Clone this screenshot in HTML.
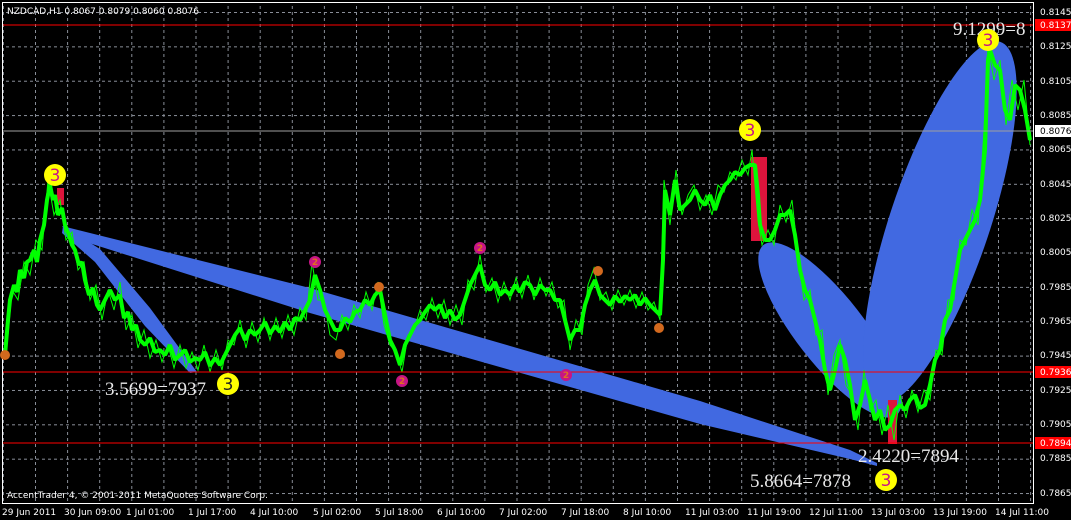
<!DOCTYPE html>
<html><head><meta charset="utf-8"><style>
html,body{margin:0;padding:0;background:#000;width:1071px;height:520px;overflow:hidden}
svg{display:block}
text{font-family:"DejaVu Sans","Liberation Sans",sans-serif}
</style></head><body>
<svg width="1071" height="520" xmlns="http://www.w3.org/2000/svg">
<defs>
<pattern id="gv" patternUnits="userSpaceOnUse" x="35" y="0" width="32.1" height="6"><line x1="0.5" y1="0" x2="0.5" y2="3" stroke="#8a8f99"/></pattern>
<pattern id="gh" patternUnits="userSpaceOnUse" x="0" y="12" width="6" height="34.36"><line x1="0" y1="0.5" x2="3" y2="0.5" stroke="#8a8f99"/></pattern>
</defs>
<rect width="1071" height="520" fill="#000"/>
<rect x="3" y="3" width="1030" height="500" fill="url(#gv)"/>
<rect x="3" y="3" width="1030" height="500" fill="url(#gh)"/>
<g fill="#4169e1">
<polygon points="62,226 310,288 700,401 850,450 877,463 877,466 850,459 700,424 310,313 70,237"/>
<polygon points="63,226 100,249 150,308 197,372 190,373 145,326 95,262 62,233"/>
<ellipse cx="830" cy="330" rx="108" ry="34" transform="rotate(52 830 330)"/>
<ellipse cx="940" cy="222" rx="190" ry="50" transform="rotate(-71.5 940 222)"/>
</g>
<g fill="#dc143c">
<rect x="57" y="188" width="7" height="17"/>
<rect x="751" y="157" width="16" height="84"/>
<rect x="888" y="400" width="9" height="44"/>
</g>
<polyline fill="none" stroke="#00ff00" stroke-width="4" stroke-linejoin="bevel" points="5,355 8,320 10,300 14,285 17,292 20,270 24,278 27,262 30,260 34,250 37,262 40,240 44,225 47,200 50,185 53,200 55,195 58,215 62,208 65,225 69,235 72,245 75,250 79,265 82,262 85,280 89,295 93,288 97,305 100,310 105,300 110,290 115,300 120,295 124,318 128,312 132,330 136,325 140,340 145,345 150,338 155,352 160,350 165,355 170,345 175,360 180,355 185,350 190,362 195,358 200,360 205,352 210,366 215,358 220,365 225,355 230,345 235,335 240,328 245,340 250,330 255,335 260,330 265,322 270,334 275,326 280,332 285,322 290,330 295,318 300,320 305,310 310,300 315,275 320,290 325,310 330,320 335,330 340,330 345,318 350,322 355,312 360,310 365,300 370,305 375,295 380,290 385,315 390,340 395,350 400,365 405,345 410,335 415,325 420,320 425,312 430,305 435,310 440,305 445,318 450,310 455,320 460,315 465,300 470,285 475,275 480,265 485,285 490,290 495,282 500,295 505,290 510,295 515,285 520,292 525,282 530,285 535,295 540,285 545,290 550,290 555,300 560,300 565,320 570,340 575,330 580,330 585,305 590,290 595,280 600,295 605,300 610,305 615,296 620,302 625,296 630,300 635,295 640,305 645,298 650,305 655,310 660,315 663,260 665,190 670,215 675,180 680,210 685,205 690,200 695,190 700,200 705,205 710,195 715,210 720,195 725,185 730,180 735,172 740,175 745,168 750,165 755,165 758,195 760,225 765,240 770,240 775,230 780,215 785,215 790,210 795,235 800,270 805,290 810,300 815,320 820,340 825,370 830,390 835,370 840,345 845,360 850,385 855,420 860,405 865,380 870,400 875,420 880,410 885,430 890,425 895,410 900,405 905,410 910,400 915,395 920,408 925,405 930,385 935,360 940,350 945,320 950,310 955,280 960,250 965,240 970,230 975,220 980,200 985,150 988,60 990,50 995,65 1000,70 1005,110 1010,120 1015,85 1020,90 1025,110 1030,140"/>
<polyline fill="none" stroke="#00ff00" stroke-width="1" points="8,335 12,290 18,300 24,262 30,275 36,240 42,250 48,180 54,215 60,200 66,240 72,232 78,270 84,262 90,300 96,285 102,320 108,290 114,310 120,282 126,330 132,315 138,348 144,330 150,358 156,340 162,362 168,345 174,368 180,345 186,368 192,352 198,370 204,345 210,372 216,350 222,370 228,340 234,345 240,320 246,348 252,322 258,342 264,318 270,340 276,318 282,338 288,315 294,335 300,308 306,320 312,262 318,300 324,300 330,335 336,340 342,315 348,330 354,305 360,318 366,292 372,310 378,282 384,325 390,345 396,352 402,372 408,335 414,330 420,310 426,320 432,298 438,318 444,300 450,325 456,305 462,325 468,280 474,290 480,255 486,292 492,278 498,302 504,282 510,300 516,278 522,298 528,275 534,300 540,278 546,296 552,282 558,308 564,300 570,350 576,320 582,335 588,285 594,268 600,300 606,292 612,310 618,290 624,305 630,290 636,308 642,292 648,310 654,302 660,320 664,180 670,225 676,170 682,215 688,195 694,185 700,210 706,195 712,215 718,185 724,192 730,172 736,180 742,160 748,175 752,150 758,220 762,245 768,230 774,245 780,205 786,222 792,200 798,255 804,300 810,290 816,335 822,330 828,395 834,355 840,340 846,385 852,395 858,430 864,370 870,410 876,400 882,435 888,405 894,440 900,395 906,418 912,390 918,412 924,390 930,400 936,350 942,355 948,300 954,300 960,240 966,245 972,210 978,225 984,130 988,45 994,80 1000,60 1006,125 1012,80 1018,110 1024,80 1030,145"/>
<line x1="3" y1="25" x2="1033" y2="25" stroke="#f00"/>
<line x1="3" y1="372" x2="1033" y2="372" stroke="#f00"/>
<line x1="3" y1="443" x2="1033" y2="443" stroke="#f00"/>
<line x1="3" y1="131" x2="1033" y2="131" stroke="#a0a0a0"/>
<rect x="2.5" y="2.5" width="1031" height="501" fill="none" stroke="#fff"/>
<g font-size="9" text-anchor="middle" font-weight="bold">
<circle cx="315" cy="262" r="6" fill="#c71585"/><text x="315" y="265" fill="#e07020">2</text>
<circle cx="480" cy="248" r="6" fill="#c71585"/><text x="480" y="251" fill="#e07020">2</text>
<circle cx="402" cy="381" r="6" fill="#c71585"/><text x="402" y="384" fill="#e07020">2</text>
<circle cx="566" cy="375" r="6" fill="#c71585"/><text x="566" y="378" fill="#e07020">2</text>
<circle cx="379" cy="287" r="5" fill="#d2691e"/>
<circle cx="340" cy="354" r="5" fill="#d2691e"/>
<circle cx="598" cy="271" r="5" fill="#d2691e"/>
<circle cx="659" cy="328" r="5" fill="#d2691e"/>
<circle cx="5" cy="355" r="5" fill="#d2691e"/>
</g>
<g font-size="19" fill="#e8e8e8">
<text x="105" y="395" style="font-family:'Liberation Serif',serif">3.5699=7937</text>
<text x="858" y="462" style="font-family:'Liberation Serif',serif">2.4220=7894</text>
<text x="750" y="487" style="font-family:'Liberation Serif',serif">5.8664=7878</text>
<text x="953" y="35" style="font-family:'Liberation Serif',serif">9.1299=8</text>
</g>
<g font-size="17" text-anchor="middle" fill="#c71585">
<circle cx="55" cy="175" r="11" fill="#ffff00"/><text x="55" y="181">3</text>
<circle cx="228" cy="384" r="11" fill="#ffff00"/><text x="228" y="390" fill="#222">3</text>
<circle cx="750" cy="130" r="11" fill="#ffff00"/><text x="750" y="136">3</text>
<circle cx="988" cy="40" r="11" fill="#ffff00"/><text x="988" y="46">3</text>
<circle cx="886" cy="480" r="11" fill="#ffff00"/><text x="886" y="486">3</text>
</g>
<g font-size="9" fill="#fff">
<text x="1040" y="15">0.8145</text><text x="1040" y="49">0.8125</text><text x="1040" y="84">0.8105</text><text x="1040" y="118">0.8085</text><text x="1040" y="152">0.8065</text><text x="1040" y="187">0.8045</text><text x="1040" y="221">0.8025</text><text x="1040" y="255">0.8005</text><text x="1040" y="290">0.7985</text><text x="1040" y="324">0.7965</text><text x="1040" y="358">0.7945</text><text x="1040" y="393">0.7925</text><text x="1040" y="427">0.7905</text><text x="1040" y="461">0.7885</text><text x="1040" y="496">0.7865</text>
<rect x="1035" y="19" width="36" height="12" fill="#f00"/><text x="1040" y="28">0.8137</text>
<rect x="1035" y="125" width="36" height="12" fill="#fff"/><text x="1040" y="134" fill="#000">0.8076</text>
<rect x="1035" y="366" width="36" height="12" fill="#f00"/><text x="1040" y="375">0.7936</text>
<rect x="1035" y="437" width="36" height="12" fill="#f00"/><text x="1040" y="446">0.7894</text>
<text x="2" y="515">29 Jun 2011</text><text x="64" y="515">30 Jun 09:00</text><text x="126" y="515">1 Jul 01:00</text><text x="188" y="515">1 Jul 17:00</text><text x="250" y="515">4 Jul 10:00</text><text x="313" y="515">5 Jul 02:00</text><text x="375" y="515">5 Jul 18:00</text><text x="437" y="515">6 Jul 10:00</text><text x="499" y="515">7 Jul 02:00</text><text x="561" y="515">7 Jul 18:00</text><text x="623" y="515">8 Jul 10:00</text><text x="685" y="515">11 Jul 03:00</text><text x="747" y="515">11 Jul 19:00</text><text x="809" y="515">12 Jul 11:00</text><text x="871" y="515">13 Jul 03:00</text><text x="933" y="515">13 Jul 19:00</text><text x="995" y="515">14 Jul 11:00</text>
<text x="7" y="498">AccentTrader 4, © 2001-2011 MetaQuotes Software Corp.</text>
<text x="7" y="14">NZDCAD,H1  0.8067 0.8079 0.8060 0.8076</text>
</g>
</svg>
</body></html>
